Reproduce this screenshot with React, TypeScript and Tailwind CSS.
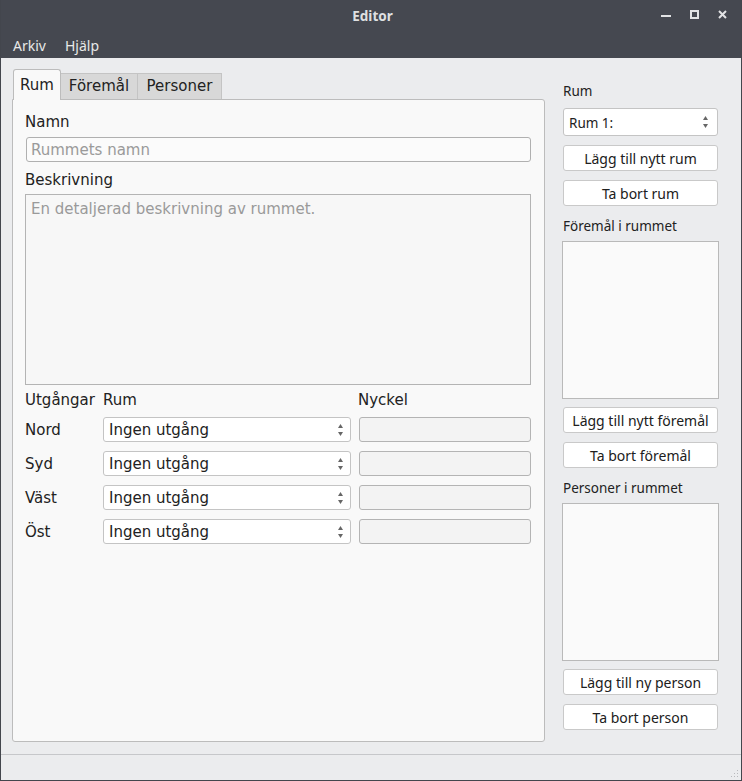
import React from 'react';

const EXITS = ['Nord', 'Syd', 'Väst', 'Öst'];

function SpinArrows() {
  return (
    <svg width="7" height="14" viewBox="0 0 7 14" className="shrink-0">
      <path d="M3.5 1 L6 5 L1 5 Z" fill="#666" />
      <path d="M3.5 13 L6 9 L1 9 Z" fill="#666" />
    </svg>
  );
}

function Combo({ label, className }: { label: string; className?: string }) {
  return (
    <div
      className={
        'flex items-center justify-between rounded-[3px] border border-[#c4c4c4] bg-white pl-[5px] pr-[6px] ' +
        (className ?? '')
      }
    >
      <span className="pt-[2px]">{label}</span>
      <SpinArrows />
    </div>
  );
}

function SideButton({ children }: { children: React.ReactNode }) {
  return (
    <button className="h-[26px] w-full rounded-[3px] border border-[#c9c9c9] bg-white pt-px text-[14px] text-[#202020]">
      {children}
    </button>
  );
}

export default function App() {
  return (
    <div className="flex h-[781px] w-[742px] flex-col overflow-hidden border-x border-b border-[#43464d] bg-[#ebecee] font-['DejaVu_Sans',sans-serif] text-[15px] text-[#222]">
      {/* title bar */}
      <div className="relative flex h-[32px] shrink-0 items-center justify-center bg-[#454850]">
        <span className="pl-[3px] font-['Noto_Sans',sans-serif] text-[13.5px] font-bold text-[#dfe0e2]">Editor</span>
        <div className="absolute right-[14px] top-[10px] flex items-center gap-[19px]">
          <svg width="10" height="9" viewBox="0 0 10 9">
            <rect x="0" y="5" width="10" height="2" fill="#e2e3e5" />
          </svg>
          <svg width="9" height="9" viewBox="0 0 9 9">
            <rect x="1" y="1" width="7" height="7" fill="none" stroke="#e2e3e5" strokeWidth="2" />
          </svg>
          <svg width="9" height="9" viewBox="0 0 9 9">
            <path d="M1 1 L8 8 M8 1 L1 8" stroke="#e2e3e5" strokeWidth="2" />
          </svg>
        </div>
      </div>

      {/* menu bar */}
      <div className="flex h-[26px] shrink-0 items-center gap-[19px] bg-[#454850] pl-[12px] font-['Noto_Sans',sans-serif] text-[14px] text-[#e8e8e8]">
        <span>Arkiv</span>
        <span>Hjälp</span>
      </div>

      {/* body */}
      <div className="flex flex-1 pl-[11px] pt-[12px]">
        {/* tab widget */}
        <div className="flex w-[533px] flex-col">
          <div className="flex h-[29px] items-end pl-px">
            <div className="relative z-10 -mb-px flex h-[31px] w-[48px] items-center justify-center rounded-t-[3px] border border-b-0 border-[#bcbcbc] bg-[#f9f9f9]">
              Rum
            </div>
            <div className="flex h-[26px] w-[77px] items-center justify-center border-r border-t border-[#c4c4c4] bg-[#d8d8d8]">
              Föremål
            </div>
            <div className="flex h-[26px] w-[84px] items-center justify-center border-r border-t border-[#c4c4c4] bg-[#d8d8d8]">
              Personer
            </div>
          </div>
          <div className="flex h-[643px] flex-col rounded-b-[3px] rounded-tr-[3px] border border-[#bcbcbc] bg-[#f9f9f9] px-[12px]">
            <div className="mt-[13px] h-[19px] leading-[19px]">Namn</div>
            <div className="mx-px mt-[5px] flex h-[25px] items-center rounded-[3px] border border-[#b0b0b0] bg-[#fbfbfb] pl-[4px] pt-[2px] text-[#9a9a9a]">
              Rummets namn
            </div>
            <div className="mt-[9px] h-[19px] leading-[19px]">Beskrivning</div>
            <div className="mr-px mt-[4px] h-[191px] border border-[#b4b4b4] bg-[#f7f7f7] pl-[5px] pt-[3px] text-[#9a9a9a]">
              En detaljerad beskrivning av rummet.
            </div>
            <div className="mt-[6px] grid grid-cols-[78px_256px_172px]">
              <div className="h-[19px] leading-[19px]">Utgångar</div>
              <div className="h-[19px] leading-[19px]">Rum</div>
              <div className="-ml-px h-[19px] leading-[19px]">Nyckel</div>
            </div>
            <div className="mt-[7px] grid grid-cols-[78px_256px_172px] gap-y-[9px]">
              {EXITS.map((name) => (
                <React.Fragment key={name}>
                  <div className="flex h-[25px] items-center pt-[2px]">{name}</div>
                  <Combo label="Ingen utgång" className="h-[25px] w-[248px]" />
                  <div className="h-[25px] rounded-[3px] border border-[#b4b4b4] bg-[#f3f3f3]" />
                </React.Fragment>
              ))}
            </div>
          </div>
        </div>

        {/* right column */}
        <div className="ml-[17px] flex w-[157px] flex-col font-['Noto_Sans',sans-serif] text-[13.5px] text-[#222]">
          <div className="mt-[12px] h-[18px] pl-px leading-[18px]">Rum</div>
          <Combo label="Rum 1:" className="ml-px mt-[8px] h-[28px] w-[155px] pr-[8px]" />
          <div className="ml-px mt-[9px] flex w-[155px] flex-col gap-[9px]">
            <SideButton>Lägg till nytt rum</SideButton>
            <SideButton>Ta bort rum</SideButton>
          </div>
          <div className="mt-[11px] h-[18px] pl-px leading-[18px]">Föremål i rummet</div>
          <div className="mt-[6px] h-[158px] w-[157px] border border-[#b9b9b9] bg-[#fafafa]" />
          <div className="ml-px mt-[8px] flex w-[155px] flex-col gap-[9px]">
            <SideButton>Lägg till nytt föremål</SideButton>
            <SideButton>Ta bort föremål</SideButton>
          </div>
          <div className="mt-[11px] h-[18px] pl-px leading-[18px]">Personer i rummet</div>
          <div className="mt-[6px] h-[158px] w-[157px] border border-[#b9b9b9] bg-[#fafafa]" />
          <div className="ml-px mt-[8px] flex w-[155px] flex-col gap-[9px]">
            <SideButton>Lägg till ny person</SideButton>
            <SideButton>Ta bort person</SideButton>
          </div>
        </div>
      </div>

      {/* status bar */}
      <div className="relative h-[26px] shrink-0 border-t border-[#c6c7ca]">
        <svg width="10" height="10" viewBox="0 0 10 10" className="absolute bottom-[2px] right-[2px]">
          {[
            [8, 2], [8, 5], [8, 8], [5, 5], [5, 8], [2, 8],
          ].map(([x, y]) => (
            <rect key={`${x}-${y}`} x={x} y={y} width="1" height="1" fill="#b8b9bc" />
          ))}
        </svg>
      </div>
    </div>
  );
}
